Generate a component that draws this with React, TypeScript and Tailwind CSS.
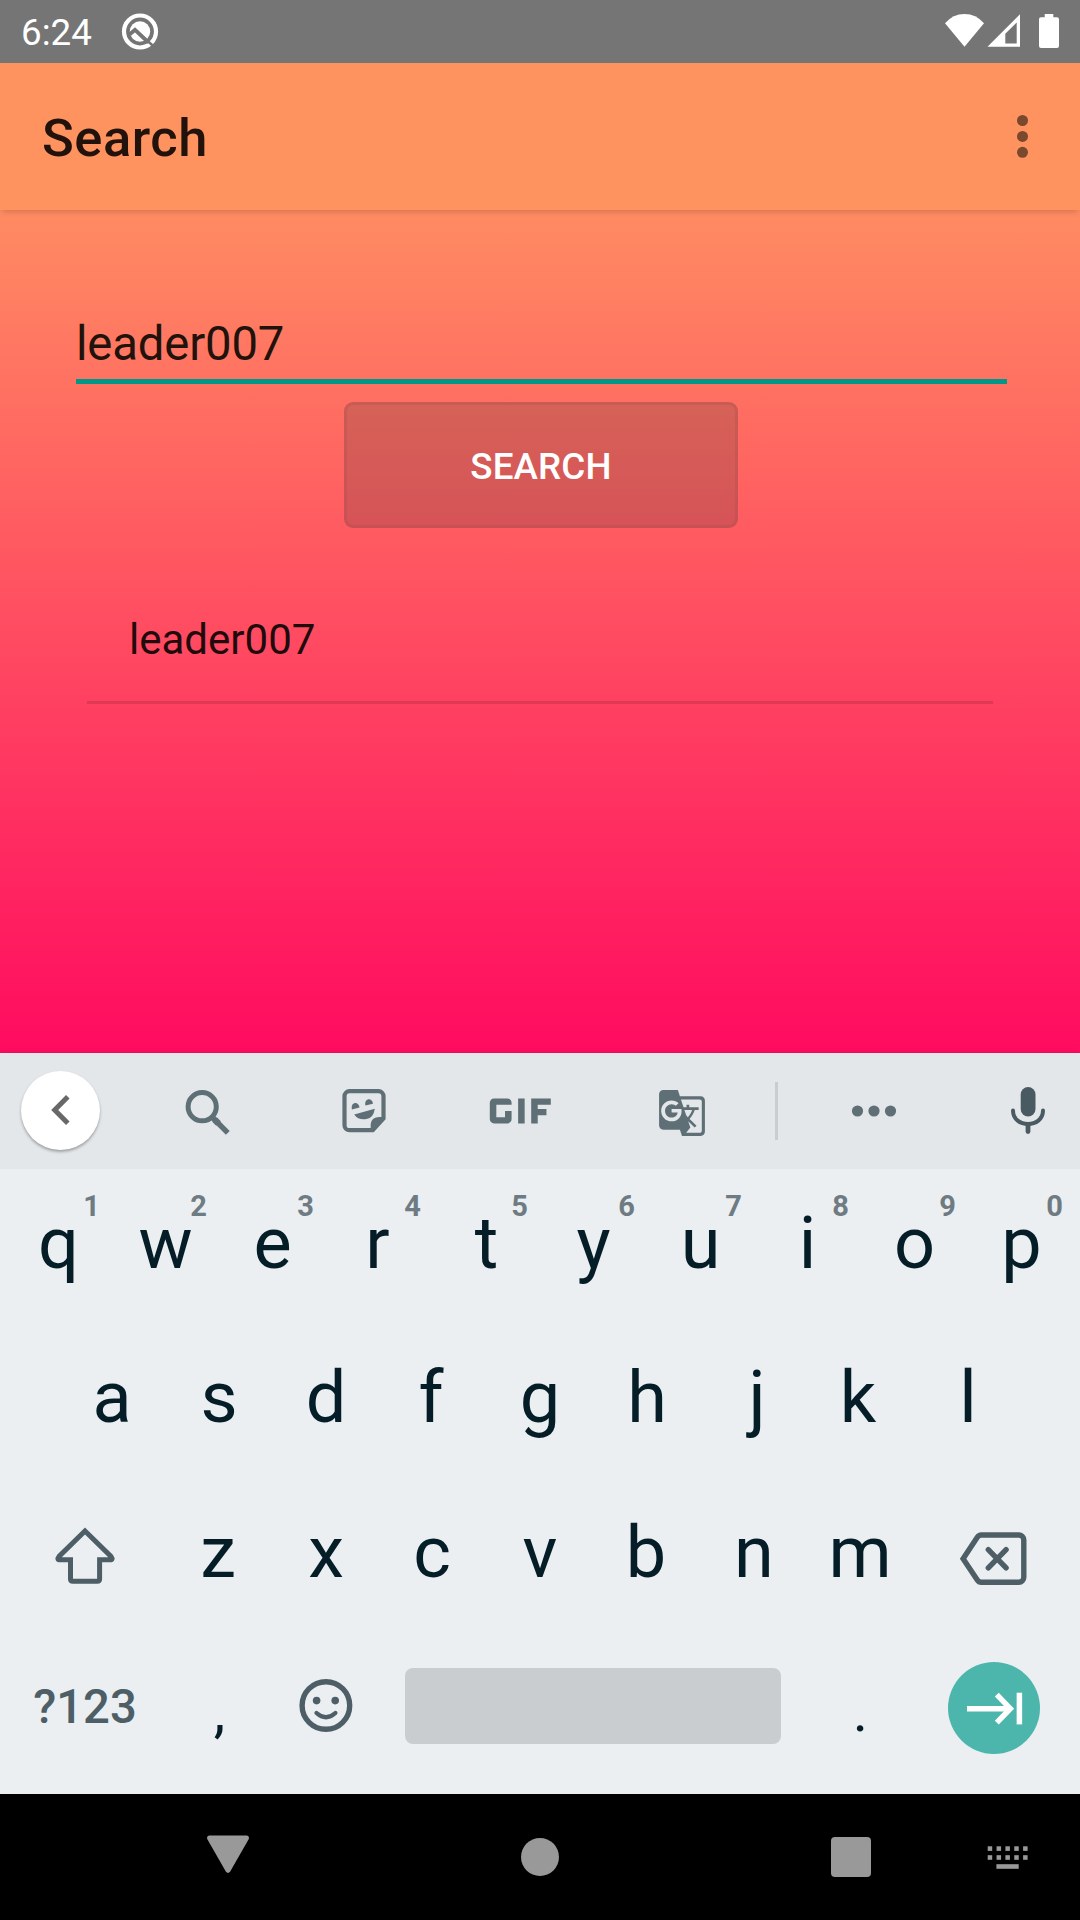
import React from "react";
import { MdGif, MdGTranslate } from "react-icons/md";

function StatusBar() {
  return (
    <header className="flex h-[63px] items-center bg-[#757575] text-white">
      <span className="w-[119px] pl-[21px] pt-1 text-[36.75px] leading-none">6:24</span>
      <svg className="h-[43px] w-[42px]" viewBox="119 10 42 43" fill="none">
        <circle cx="140" cy="31.5" r="16" stroke="white" strokeWidth="4.2" />
        <circle cx="140" cy="31.5" r="10.2" fill="white" />
        <path d="M129.5 34.5 L135 29.8 L148.5 42.5" stroke="#757575" strokeWidth="3.8" />
        <path d="M147 40.5 L155 47.5" stroke="#757575" strokeWidth="2.4" />
      </svg>
      <svg className="ml-auto mr-[18px] h-[43px] w-[120px]" viewBox="942 10 120 43" fill="white">
        <path d="M964.5 46.7 L945 23.3 Q953 14 964.5 14 Q976 14 984 23.3Z" />
        <path fillRule="evenodd" d="M987.5 46.7 L1020 14.3 V46.7Z M1005.3 43.5 H1016.7 V22.5 L1005.3 33.7Z" />
        <path d="M1044.7 14 h8.6 v3.2 h3.7 a2 2 0 0 1 2 2 V46 a2 2 0 0 1-2 2 H1041 a2 2 0 0 1-2-2 V19.2 a2 2 0 0 1 2-2 h3.7Z" />
      </svg>
    </header>
  );
}

function AppBar() {
  return (
    <div className="relative flex h-[147px] items-center justify-between bg-[#ff9360] pl-[42px] pr-[50px] shadow-[0_4px_6px_-2px_rgba(0,0,0,0.16)]">
      <h1 className="pt-[4px] text-[52.5px] font-medium leading-none tracking-[0.5px] text-[#21120b]">Search</h1>
      <svg className="h-[45px] w-[15px]" viewBox="1015 114 15 45" fill="#7a472f">
        <circle cx="1022.5" cy="120.5" r="5.5" />
        <circle cx="1022.5" cy="136.4" r="5.5" />
        <circle cx="1022.5" cy="152.3" r="5.5" />
      </svg>
    </div>
  );
}

function Content() {
  return (
    <main className="h-[843px] bg-linear-to-b/srgb from-[#ff8c62] to-[#ff0b60] pt-[105px]">
      <div className="ml-[76px] h-[69px] w-[931px] border-b-[5px] border-[#009688] text-[47.25px] leading-[58px] tracking-[-0.15px] text-[#21120b]">
        leader007
      </div>
      <button className="ml-[344px] mt-[18px] flex h-[126px] w-[394px] items-center justify-center rounded-[9px] border-[3px] border-[#a04c4c]/25 bg-[#333]/20 pt-[4px] text-[36.75px] font-medium tracking-[0.15px] text-white">
        SEARCH
      </button>
      <div className="mx-auto mt-[47px] h-[129px] w-[906px] border-b-[3px] border-black/12 pl-[42px] text-[42px] leading-[130px] text-[#210a0c]">
        leader007
      </div>
    </main>
  );
}

function SuggestionStrip() {
  return (
    <div className="relative flex h-[116px] items-center bg-[#e3e7ea] text-[#5f6f76] shadow-[0_-1px_4px_rgba(0,0,0,0.1)]">
      <div className="flex w-[121px] justify-center">
        <div className="mb-px flex h-[79px] w-[79px] items-center justify-center rounded-full bg-white shadow-[0_2px_3px_rgba(0,0,0,0.3)]">
          <svg className="h-[41px] w-[41px]" viewBox="40.5 1090 41 41" fill="none" stroke="#686868" strokeWidth="5">
            <path d="M68.3 1096.7 L55.2 1110 L68.3 1123.3" />
          </svg>
        </div>
      </div>
      <div className="flex w-[171px] justify-center">
        <svg className="h-[56px] w-[56px]" viewBox="178.5 1083 56 56" fill="none" stroke="currentColor">
          <circle cx="201.7" cy="1106.7" r="14.1" strokeWidth="5" />
          <path d="M211.5 1117 L227.3 1132.8" strokeWidth="5.4" />
          <path d="M214 1119.5 L218 1123.5" strokeWidth="6.5" />
        </svg>
      </div>
      <div className="flex w-[143px] justify-center">
        <svg className="h-[50px] w-[50px]" viewBox="338.5 1086 50 50" fill="currentColor">
          <path
            d="M349 1091.2 H378 a5 5 0 0 1 5 5 V1118.4 L372.3 1130.2 H349 a5 5 0 0 1-5-5 V1096.2 a5 5 0 0 1 5-5Z"
            fill="none"
            stroke="currentColor"
            strokeWidth="4.2"
          />
          <path d="M370.2 1130 V1124 Q371 1117 379 1117 H383 L372 1131Z" />
          <path d="M351.4 1109.4 C349.8 1101.5 358.5 1101 359 1107.6Z" />
          <path d="M364.9 1105.6 C363.3 1097.7 372 1097.2 372.5 1103.8Z" />
          <path d="M353.7 1114.4 L374.3 1108.7 Q373 1118 366 1119 Q358 1120.5 353.7 1114.4Z" />
        </svg>
      </div>
      <div className="flex w-[171px] justify-center">
        <MdGif className="h-[100px] w-[104.6px]" preserveAspectRatio="none" />
      </div>
      <div className="flex w-[152px] justify-center pt-1">
        <MdGTranslate className="h-[50px] w-[50px]" />
      </div>
      <div className="mx-[17px] h-[58px] w-[3px] bg-[#c9cdd0]" />
      <div className="flex w-[158px] justify-center">
        <svg className="h-[12px] w-[46px]" viewBox="851 1105 46 12" fill="currentColor">
          <circle cx="857.5" cy="1111" r="5.6" />
          <circle cx="874" cy="1111" r="5.6" />
          <circle cx="890.5" cy="1111" r="5.6" />
        </svg>
      </div>
      <svg className="ml-[55px] h-[56px] w-[40px]" viewBox="1008.3 1083 40 56" fill="none" stroke="#4a5a62" strokeWidth="4">
        <rect x="1021" y="1087" width="14.8" height="29.4" rx="7.4" fill="#4a5a62" stroke="none" />
        <path d="M1013.3 1110.5 C1013.3 1128.5 1043.3 1128.5 1043.3 1110.5" strokeLinecap="round" />
        <path d="M1028.3 1125 V1131.5" strokeWidth="4.8" strokeLinecap="round" />
      </svg>
    </div>
  );
}

// Optical centring for glyphs whose ink is off-centre in their advance width.
const nudge: Record<string, string> = {
  r: "-translate-x-[2px]",
  f: "-translate-x-[2px]",
  j: "translate-x-[3px]",
  k: "-translate-x-[3px]",
  z: "-translate-x-px",
  c: "-translate-x-px",
  b: "-translate-x-px",
  m: "-translate-x-px",
};

function Key({ label, hint }: { label: string; hint?: string }) {
  return (
    <div className="relative w-[107px] text-center text-[72px] leading-[149px]">
      <span className={`inline-block ${nudge[label] ?? ""}`}>{label}</span>
      {hint && (
        <span className="absolute right-[12px] top-[23px] text-[29px] font-bold leading-none text-[#6f7b82]">{hint}</span>
      )}
    </div>
  );
}

function Keyboard() {
  return (
    <div className="relative flex h-[625px] flex-col bg-[#ebeff2] text-[#051d27]">
      <div className="flex h-[154px] justify-center">
        {"qwertyuiop".split("").map((c, i) => (
          <Key key={c} label={c} hint={String((i + 1) % 10)} />
        ))}
      </div>
      <div className="flex h-[155px] justify-center">
        {"asdfghjkl".split("").map((c) => (
          <Key key={c} label={c} />
        ))}
      </div>
      <div className="flex h-[155px] justify-center">
        <div className="flex w-[160.5px] justify-center pt-[46px]">
          <svg className="h-[64px] w-[66px]" viewBox="52 1524 66 64" fill="none" stroke="#4d5e66" strokeWidth="5">
            <path d="M85 1531 L111 1556.5 Q113.5 1559.8 110 1559.8 H99.6 V1579 Q99.6 1581.3 97.3 1581.3 H72.8 Q70.5 1581.3 70.5 1579 V1559.8 H60 Q56.5 1559.8 59 1556.5Z" />
          </svg>
        </div>
        {"zxcvbnm".split("").map((c) => (
          <Key key={c} label={c} />
        ))}
        <div className="flex w-[160.5px] justify-center pt-[46px]">
          <svg className="h-[64px] w-[72px]" viewBox="959.2 1524 72 64" fill="none" stroke="#4d5e66" strokeWidth="5.4">
            <path d="M981.5 1535 H1019 a5 5 0 0 1 5 5 V1577.3 a5 5 0 0 1-5 5 H981.5 Q979 1582.3 977.5 1580 L963.3 1558.7 L977.5 1537.3 Q979 1535 981.5 1535Z" />
            <path d="M988.5 1549.7 L1006.3 1567.8 M1006.3 1549.7 L988.5 1567.8" strokeLinecap="round" />
          </svg>
        </div>
      </div>
      <div className="flex h-[161px] px-[5px]">
        <div className="w-[160px] text-center text-[47.25px] font-medium leading-[148px] text-[#4d5e66]">?123</div>
        <div className="w-[107px] pl-[2px] text-center text-[58px] leading-[157px]">,</div>
        <div className="flex w-[107px] justify-center pt-[44px]">
          <svg className="h-[58px] w-[58px]" viewBox="296.5 1677 58 58" fill="none" stroke="#4d5e66">
            <circle cx="325.4" cy="1705.5" r="23.8" strokeWidth="5.4" />
            <circle cx="316.1" cy="1700.6" r="3.8" fill="#4d5e66" stroke="none" />
            <circle cx="334.7" cy="1700.6" r="3.8" fill="#4d5e66" stroke="none" />
            <path d="M316 1713 Q325.4 1721.5 334.9 1713" strokeWidth="4.3" strokeLinecap="round" />
          </svg>
        </div>
        <div className="ml-[26px] mt-[35px] h-[76px] w-[376px] rounded-[8px] bg-[#c9cdd0]" />
        <div className="ml-[26px] w-[107px] text-center text-[58px] leading-[157px]">.</div>
        <div className="ml-[34px] mt-[29px] h-[92px] w-[92px] rounded-full bg-[#4db6ac]">
          <svg className="h-[92px] w-[92px]" viewBox="948 1662 92 92" fill="none" stroke="white" strokeWidth="5.5">
            <path d="M967 1708.7 H1010" />
            <path d="M996.8 1694.7 L1010.3 1708.7 L996.8 1722.7" />
            <path d="M1019.4 1692.7 V1724.4" />
          </svg>
        </div>
      </div>
    </div>
  );
}

function NavBar() {
  const columns = [0, 1, 2, 3, 4];
  return (
    <nav className="flex h-[126px] items-center bg-black">
      <svg className="ml-[204px] h-[48px] w-[48px]" viewBox="204 1833 48 48" fill="#999">
        <path d="M209 1835.5 H247 Q250 1836.5 248.5 1839.5 L230.2 1871.5 Q228 1874.3 225.8 1871.5 L207.5 1839.5 Q206 1836.5 209 1835.5Z" />
      </svg>
      <div className="ml-[269px] h-[38px] w-[38px] rounded-full bg-[#999]" />
      <div className="ml-[272px] h-[40px] w-[40px] rounded-[4px] bg-[#999]" />
      <svg className="ml-[113px] h-[30px] w-[48px]" viewBox="984 1842 48 30" fill="#999">
        {columns.map((c) => (
          <g key={c}>
            <rect x={987.7 + c * 8.85} y="1846.3" width="4.5" height="4.6" />
            <rect x={987.7 + c * 8.85} y="1855.2" width="4.5" height="4.6" />
          </g>
        ))}
        <rect x="996.4" y="1864.2" width="22.3" height="4.6" />
      </svg>
    </nav>
  );
}

export default function App() {
  return (
    <div className="flex h-[1920px] w-[1080px] flex-col overflow-hidden font-['Roboto',sans-serif]">
      <StatusBar />
      <AppBar />
      <Content />
      <SuggestionStrip />
      <Keyboard />
      <NavBar />
    </div>
  );
}
